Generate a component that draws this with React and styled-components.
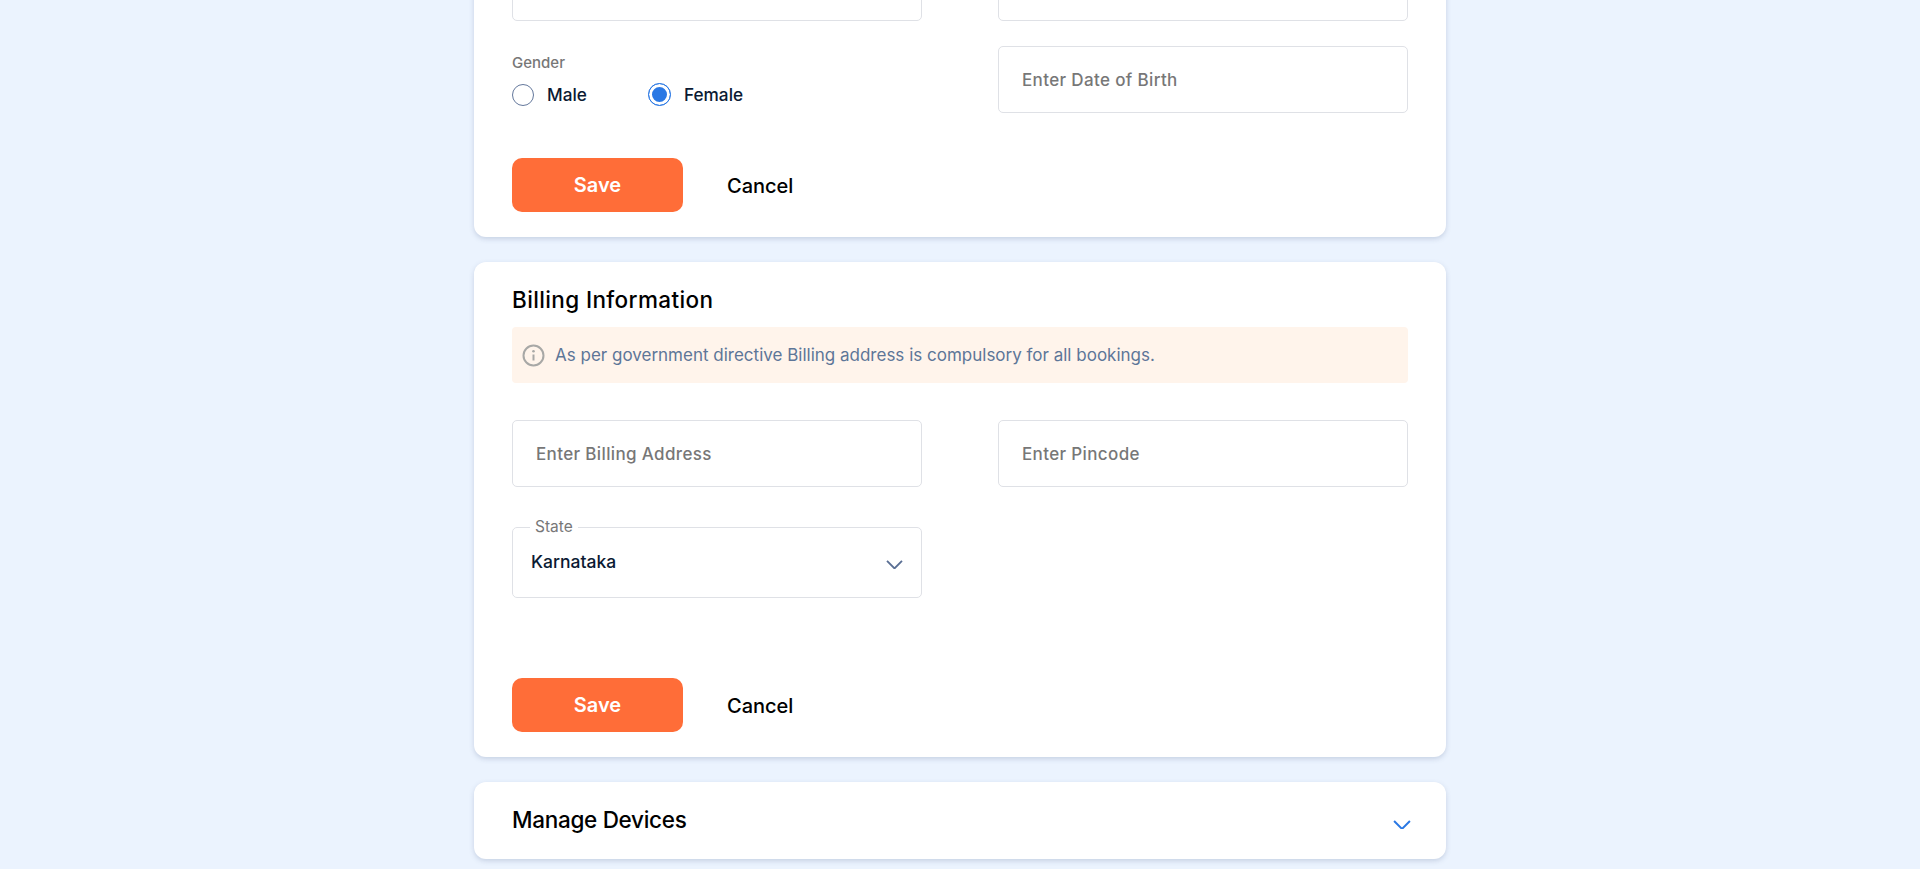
import React from 'react'
import styled, { createGlobalStyle } from 'styled-components'

const GlobalStyle = createGlobalStyle`
  html, body {
    margin: 0;
    height: 100%;
    overflow: hidden;
    background: #ebf3fe;
  }
  * {
    box-sizing: border-box;
  }
  body {
    font-family: 'Inter', 'Noto Sans', sans-serif;
    color: #000;
  }
`

const Page = styled.div`
  height: 869px;
  overflow: hidden;
`
// the page is scrolled in the screenshot, so the first card starts above the fold
const Column = styled.main`
  width: 972px;
  margin: -72px auto 0;
  display: flex;
  flex-direction: column;
  gap: 25px;
`
const Card = styled.section`
  background: #fff;
  border-radius: 12px;
  box-shadow: 0 2px 5px rgba(90, 110, 150, 0.25);
  padding: ${(p) => p.$pad || '26px 38px 25px'};
`
const Title = styled.h2`
  margin: 0;
  font-size: 22.5px;
  line-height: 30px;
  font-weight: 500;
  letter-spacing: ${(p) => p.$spacing || '0'};
  color: #000;
`
const Notice = styled.div`
  display: flex;
  align-items: center;
  gap: 10px;
  height: 56px;
  margin-top: 12px;
  padding-left: 10px;
  background: #fff4eb;
  border-radius: 4px;
  font-size: 17px;
  color: #5d7698;
`
const FormGrid = styled.div`
  display: grid;
  grid-template-columns: 410px 410px;
  column-gap: 76px;
  row-gap: ${(p) => p.$rowGap || '25px'};
  margin-top: ${(p) => p.$top || '0'};
`
const Field = styled.label`
  display: flex;
  align-items: center;
  height: 67px;
  padding: 0 23px;
  border: 1px solid #dfe1e6;
  border-radius: 5px;
  font-size: 17px;
  font-weight: 500;
  letter-spacing: 0.36px;
  color: #777;
`
const GenderGroup = styled.div`
  padding-top: 8px;
`
const GroupLabel = styled.div`
  font-size: 15px;
  line-height: 18px;
  font-weight: 500;
  color: #777;
`
const RadioRow = styled.div`
  display: flex;
  margin-top: 11px;
`
const RadioOption = styled.label`
  display: flex;
  align-items: center;
  gap: 13px;
  width: ${(p) => p.$width};
  font-size: 17.2px;
  line-height: 22px;
  font-weight: 500;
  color: #0b1a33;
`
const RadioMark = styled.span`
  width: ${(p) => (p.$checked ? '23px' : '22px')};
  height: ${(p) => (p.$checked ? '23px' : '22px')};
  border-radius: 50%;
  border: 1px solid ${(p) => (p.$checked ? '#2a78e4' : '#64789c')};
  background: ${(p) => (p.$checked ? '#2a78e4' : '#fff')};
  box-shadow: ${(p) => (p.$checked ? 'inset 0 0 0 3px #fff' : 'none')};
`
const SelectBox = styled.fieldset`
  height: 78px;
  margin: 0;
  padding: 0 0 0 18px;
  border: 1px solid #dfe1e6;
  border-radius: 5px;
  min-width: 0;
`
const SelectLegend = styled.legend`
  margin-left: -1px;
  padding: 0 5px;
  font-size: 15.5px;
  line-height: 14px;
  color: #777;
`
const SelectRow = styled.div`
  display: flex;
  align-items: center;
  justify-content: space-between;
  height: 55px;
  padding-right: 18px;
  font-size: 17.5px;
  font-weight: 500;
  color: #0b1a33;
`
const Actions = styled.div`
  display: flex;
  align-items: center;
  gap: 44px;
  margin-top: ${(p) => p.$top};
`
const SaveButton = styled.button`
  width: 171px;
  height: 54px;
  padding-top: 1px;
  border: 0;
  border-radius: 10px;
  background: #ff6d38;
  color: #fff;
  font: 600 20px 'Inter', sans-serif;
`
const CancelButton = styled.button`
  padding: 1px 0 0;
  border: 0;
  background: none;
  color: #000;
  font: 500 20px 'Inter', sans-serif;
`
const AccordionHead = styled.div`
  display: flex;
  align-items: center;
  justify-content: space-between;
  height: 77px;
  padding-bottom: 2px;
`
const ChevronWrap = styled.span`
  display: flex;
  margin: ${(p) => p.$margin || '0'};
`

const Chevron = ({ color, width }) => (
  <svg width={width} height={width * 0.55} viewBox="0 0 18 10" fill="none">
    <path d="M1 1l8 8 8-8" stroke={color} strokeWidth="2" />
  </svg>
)

const InfoIcon = () => (
  <svg width="23" height="23" viewBox="0 0 23 23" fill="none">
    <circle cx="11.5" cy="11.5" r="10" stroke="#a8a8a6" strokeWidth="2" />
    <circle cx="11.5" cy="7.2" r="1.3" fill="#a8a8a6" />
    <path d="M11.5 10.5v6" stroke="#a8a8a6" strokeWidth="2" />
  </svg>
)

const FormActions = ({ top }) => (
  <Actions $top={top}>
    <SaveButton type="button">Save</SaveButton>
    <CancelButton type="button">Cancel</CancelButton>
  </Actions>
)

const App = () => (
  <Page>
    <GlobalStyle />
    <Column>
      <Card>
        <FormGrid>
          <Field />
          <Field />
          <GenderGroup>
            <GroupLabel>Gender</GroupLabel>
            <RadioRow>
              <RadioOption $width="136px">
                <RadioMark />
                Male
              </RadioOption>
              <RadioOption>
                <RadioMark $checked />
                Female
              </RadioOption>
            </RadioRow>
          </GenderGroup>
          <Field>Enter Date of Birth</Field>
        </FormGrid>
        <FormActions top="45px" />
      </Card>

      <Card $pad="23px 38px 25px">
        <Title $spacing="0.37px">Billing Information</Title>
        <Notice>
          <InfoIcon />
          As per government directive Billing address is compulsory for all bookings.
        </Notice>
        <FormGrid $top="37px" $rowGap="33px">
          <Field>Enter Billing Address</Field>
          <Field>Enter Pincode</Field>
          <SelectBox>
            <SelectLegend>State</SelectLegend>
            <SelectRow>
              Karnataka
              <ChevronWrap $margin="6px 0 0">
                <Chevron color="#5a6f94" width={17} />
              </ChevronWrap>
            </SelectRow>
          </SelectBox>
        </FormGrid>
        <FormActions top="80px" />
      </Card>

      <Card $pad="0 38px">
        <AccordionHead>
          <Title $spacing="-0.3px">Manage Devices</Title>
          <ChevronWrap $margin="10px -3px 0 0">
            <Chevron color="#2a78e4" width={18} />
          </ChevronWrap>
        </AccordionHead>
      </Card>
    </Column>
  </Page>
)

export default App
